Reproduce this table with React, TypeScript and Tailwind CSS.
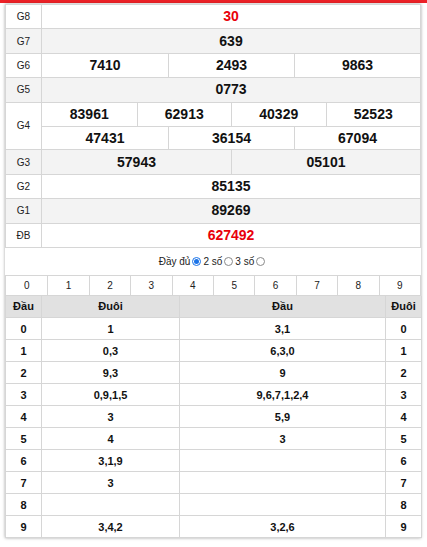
import React from "react";

const prizes: { label: string; nums: string[][]; red?: boolean }[] = [
  { label: "G8", nums: [["30"]], red: true },
  { label: "G7", nums: [["639"]] },
  { label: "G6", nums: [["7410", "2493", "9863"]] },
  { label: "G5", nums: [["0773"]] },
  { label: "G4", nums: [["83961", "62913", "40329", "52523"], ["47431", "36154", "67094"]] },
  { label: "G3", nums: [["57943", "05101"]] },
  { label: "G2", nums: [["85135"]] },
  { label: "G1", nums: [["89269"]] },
  { label: "ĐB", nums: [["627492"]], red: true },
];

const loto: [string, string, string][] = [
  ["0", "1", "3,1"],
  ["1", "0,3", "6,3,0"],
  ["2", "9,3", "9"],
  ["3", "0,9,1,5", "9,6,7,1,2,4"],
  ["4", "3", "5,9"],
  ["5", "4", "3"],
  ["6", "3,1,9", ""],
  ["7", "3", ""],
  ["8", "", ""],
  ["9", "3,4,2", "3,2,6"],
];

const gridCols: Record<number, string> = {
  1: "grid-cols-1",
  2: "grid-cols-2",
  3: "grid-cols-3",
  4: "grid-cols-4",
};

function Radio({ checked }: { checked?: boolean }) {
  return checked ? (
    <span className="inline-flex w-[9px] h-[9px] rounded-full border border-[#1a73e8] items-center justify-center mx-[2px]">
      <span className="w-[5px] h-[5px] rounded-full bg-[#1a73e8]" />
    </span>
  ) : (
    <span className="inline-block w-[9px] h-[9px] rounded-full border border-[#8a8a8a] bg-white mx-[2px]" />
  );
}

export default function App() {
  return (
    <div className="w-[427px] h-[547px] bg-white overflow-hidden font-['Liberation_Sans',Arial,sans-serif] text-[#111]">
      <div className="h-[3px] bg-[#ec2127]" />
      <div className="ml-[5px] w-[416px] mt-px shadow-[0_0_3px_rgba(0,0,0,0.35)] bg-white">
        {/* ket qua */}
        <div className="border border-[#d6d6d6]">
          {prizes.map((p, i) => (
            <div
              key={p.label}
              className={`flex ${i > 0 ? "border-t border-[#d6d6d6]" : ""} ${i % 2 === 1 ? "bg-[#f3f3f3]" : "bg-white"}`}
            >
              <div className="w-[36px] shrink-0 flex items-center justify-center text-[10px] text-[#222] border-r border-[#d6d6d6]">
                {p.label}
              </div>
              <div className="flex-1">
                {p.nums.map((row, ri) => (
                  <div
                    key={ri}
                    className={`grid ${gridCols[row.length]} h-[23.4px] ${ri > 0 ? "border-t border-[#d6d6d6]" : ""}`}
                  >
                    {row.map((n, ci) => (
                      <div
                        key={ci}
                        className={`flex items-center justify-center text-[14px] font-bold ${p.red ? "text-[#e8000b]" : "text-[#111]"} ${ci > 0 ? "border-l border-[#d6d6d6]" : ""}`}
                      >
                        {n}
                      </div>
                    ))}
                  </div>
                ))}
              </div>
            </div>
          ))}
        </div>

        <div className="h-[27px] flex items-center justify-center text-[10px] text-[#222]">
          Đầy đủ <Radio checked />2 số <Radio />3 số <Radio />
        </div>

        {/* loto */}
        <div className="grid grid-cols-10 h-[21px] border border-[#d6d6d6] text-[10px] text-[#222]">
          {Array.from({ length: 10 }, (_, i) => (
            <div key={i} className={`flex items-center justify-center ${i > 0 ? "border-l border-[#d6d6d6]" : ""}`}>
              {i}
            </div>
          ))}
        </div>
        <table className="w-full border-collapse text-[11px] font-bold text-[#111] table-fixed">
          <colgroup>
            <col className="w-[36px]" />
            <col className="w-[138px]" />
            <col className="w-[206px]" />
            <col className="w-[36px]" />
          </colgroup>
          <thead>
            <tr className="bg-[#e1e1e1] h-[22px]">
              <th className="border border-[#d6d6d6] border-t-0 font-bold">Đầu</th>
              <th className="border border-[#d6d6d6] border-t-0 font-bold">Đuôi</th>
              <th className="border border-[#d6d6d6] border-t-0 font-bold">Đầu</th>
              <th className="border border-[#d6d6d6] border-t-0 font-bold">Đuôi</th>
            </tr>
          </thead>
          <tbody>
            {loto.map(([d, a, b]) => (
              <tr key={d} className="h-[22px]">
                <td className="border border-[#d6d6d6] text-center">{d}</td>
                <td className="border border-[#d6d6d6] text-center">{a}</td>
                <td className="border border-[#d6d6d6] text-center">{b}</td>
                <td className="border border-[#d6d6d6] text-center">{d}</td>
              </tr>
            ))}
          </tbody>
        </table>
      </div>
    </div>
  );
}
